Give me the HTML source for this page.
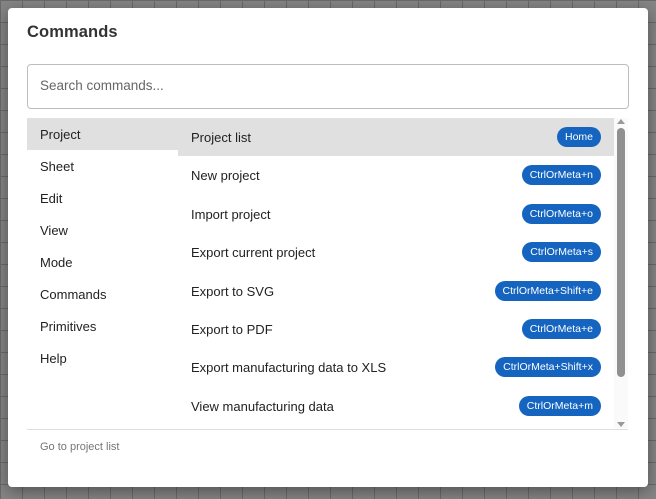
<!DOCTYPE html>
<html><head><style>
body{margin:0;width:656px;height:499px;overflow:hidden;background:#858585;font-family:"Liberation Sans",sans-serif;position:relative}
.grid{position:absolute;inset:0;background-image:linear-gradient(#6a6a6a 1px,transparent 1px),linear-gradient(90deg,#6a6a6a 1px,transparent 1px);background-size:22px 22px}
.dlg{position:absolute;left:8px;top:8px;width:640px;height:479px;background:#fff;border-radius:4px;box-shadow:0 4px 16px rgba(0,0,0,.4)}
h1{position:absolute;left:19px;top:15px;margin:0;font-size:16.5px;font-weight:bold;color:#333;letter-spacing:0.1px}
.search{position:absolute;left:19px;top:56px;width:602px;height:45px;border:1px solid #bdbdbd;border-radius:4px;box-sizing:border-box;font-size:13.5px;color:#666;padding:13px 12px}
.menu{position:absolute;left:19px;top:110px;width:151px}
.menu div{height:32px;line-height:33px;padding-left:13px;font-size:13px;color:#222}
.menu .sel{background:#e0e0e0}
.list{position:absolute;left:170px;top:110px;width:436px}
.row{height:38.4px;position:relative;font-size:13px;color:#222}
.row span{position:absolute;left:13px;top:12px}
.row.sel{background:#e0e0e0}
.b{position:absolute;right:13px;top:9px;height:20px;line-height:20px;padding:0 8px;border-radius:10px;background:#1565c0;color:#fff;font-size:10.5px;font-style:normal}
.sb{position:absolute;left:606px;top:110px;width:14px;height:310px;background:#fafafa}
.th{position:absolute;left:3px;top:10px;width:8px;height:249px;background:#909090;border-radius:4px}
.foot{position:absolute;left:19px;top:421px;width:601px;border-top:1px solid #e0e0e0}
.ft{position:absolute;left:32px;top:433px;font-size:11px;color:#757575}
</style></head><body>
<div class="grid"></div>
<div class="dlg">
<h1>Commands</h1>
<div class="search">Search commands...</div>
<div class="menu"><div class="sel">Project</div><div>Sheet</div><div>Edit</div><div>View</div><div>Mode</div><div>Commands</div><div>Primitives</div><div>Help</div></div>
<div class="list">
<div class="row sel"><span>Project list</span><i class="b">Home</i></div>
<div class="row"><span>New project</span><i class="b">CtrlOrMeta+n</i></div>
<div class="row"><span>Import project</span><i class="b">CtrlOrMeta+o</i></div>
<div class="row"><span>Export current project</span><i class="b">CtrlOrMeta+s</i></div>
<div class="row"><span>Export to SVG</span><i class="b">CtrlOrMeta+Shift+e</i></div>
<div class="row"><span>Export to PDF</span><i class="b">CtrlOrMeta+e</i></div>
<div class="row"><span>Export manufacturing data to XLS</span><i class="b">CtrlOrMeta+Shift+x</i></div>
<div class="row"><span>View manufacturing data</span><i class="b">CtrlOrMeta+m</i></div>
</div>
<div class="sb"><div style="position:absolute;left:3px;top:1px;border:4px solid transparent;border-bottom:5px solid #999;border-top:0"></div><div class="th"></div><div style="position:absolute;left:3px;bottom:1px;border:4px solid transparent;border-top:5px solid #999;border-bottom:0"></div></div>
<div class="foot"></div>
<div class="ft">Go to project list</div>
</div>
</body></html>
